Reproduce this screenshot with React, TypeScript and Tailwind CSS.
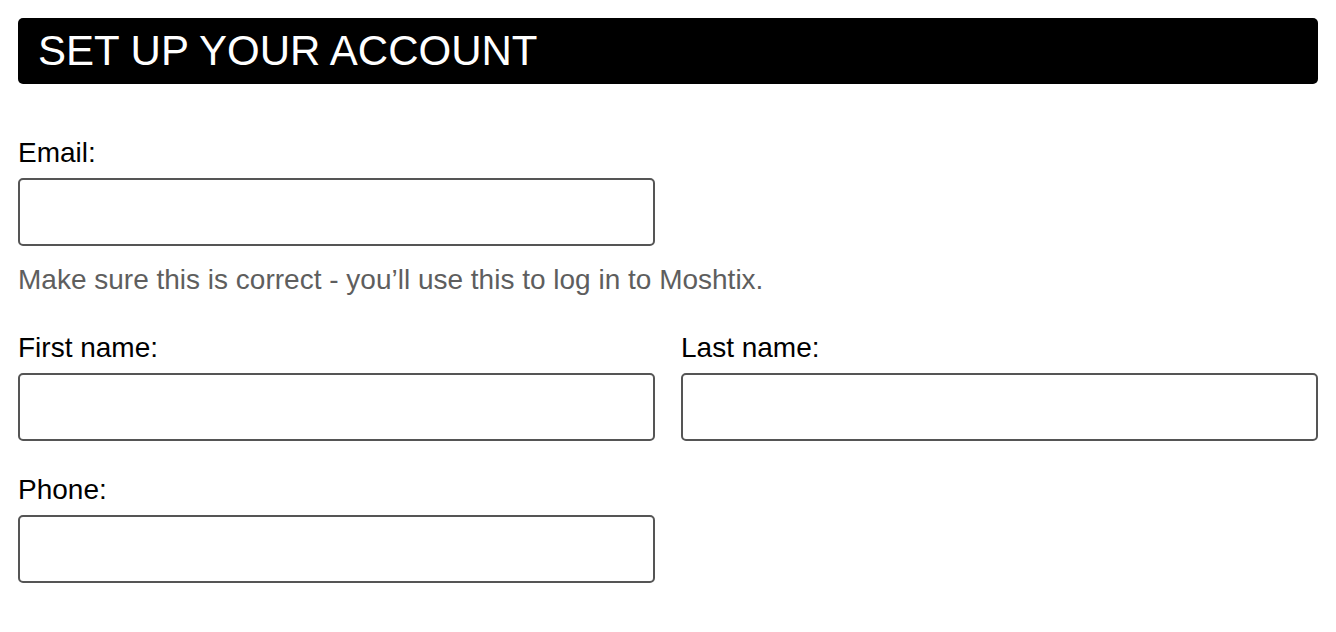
import type { ReactNode } from 'react';

function Field({ label, id, children }: { label: string; id: string; children?: ReactNode }) {
  return (
    <div className="flex flex-col">
      <label htmlFor={id} className="mb-[9px] text-[28px] leading-8 text-black">
        {label}
      </label>
      <input
        id={id}
        type="text"
        className="h-[68px] w-full rounded-[5px] border-2 border-[#555555] bg-white px-3 text-[28px] outline-none"
      />
      {children}
    </div>
  );
}

export default function App() {
  return (
    <div
      className="min-h-screen bg-white px-[18px] pt-[18px]"
      style={{ fontFamily: '"Liberation Sans", Arial, Helvetica, sans-serif' }}
    >
      {/* Title bar */}
      <div className="flex h-[66px] items-center rounded-[5px] bg-black pl-5">
        <h1 className="text-[42px] leading-none text-white">SET UP YOUR ACCOUNT</h1>
      </div>

      <form className="mt-[53px] w-full">
        <div className="grid grid-cols-2 gap-x-[26px]">
          <Field label="Email:" id="email">
            <p className="mt-[18px] w-max text-[28px] leading-8 text-[#5e5e5e]">
              Make sure this is correct - you’ll use this to log in to Moshtix.
            </p>
          </Field>
        </div>

        <div className="mt-[36px] grid grid-cols-2 gap-x-[26px]">
          <Field label="First name:" id="first-name" />
          <Field label="Last name:" id="last-name" />
        </div>

        <div className="mt-[33px] grid grid-cols-2 gap-x-[26px]">
          <Field label="Phone:" id="phone" />
        </div>
      </form>
    </div>
  );
}
